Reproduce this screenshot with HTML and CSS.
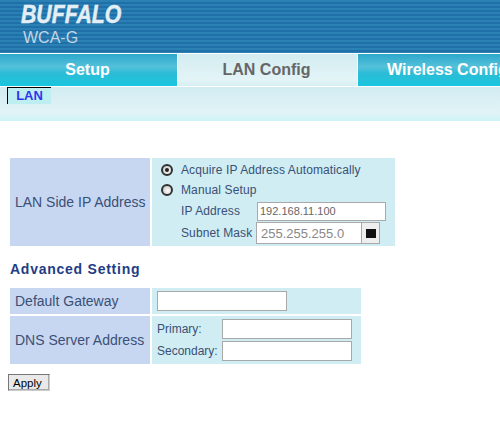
FILE: index.html
```html
<!DOCTYPE html>
<html lang="en">
<head>
<meta charset="UTF-8">
<title>LAN Config</title>
<link rel="stylesheet" href="styles.css">
</head>
<body>
<header class="banner">
  <div class="logo">BUFFALO</div>
  <div class="model">WCA-G</div>
</header>

<nav class="tabs">
  <div class="tab tab-setup">Setup</div>
  <div class="tab tab-lan active">LAN Config</div>
  <div class="tab tab-wireless">Wireless Config</div>
</nav>

<div class="subnav">
  <div class="subtab">LAN</div>
</div>

<main class="content">
  <!-- LAN side -->
  <div class="block block-lan">
    <div class="label">LAN Side IP Address</div>
    <div class="value lan-value">
      <div class="radio-row"><span class="radio checked"></span>Acquire IP Address Automatically</div>
      <div class="radio-row"><span class="radio"></span>Manual Setup</div>
      <div class="field-row ip-row"><span class="field-name">IP Address</span><input class="box ip" type="text" value="192.168.11.100"></div>
      <div class="field-row mask-row"><span class="field-name">Subnet Mask</span><div class="select"><span class="select-text">255.255.255.0</span><span class="select-btn"><i></i></span></div></div>
    </div>
  </div>

  <h2>Advanced Setting</h2>

  <div class="block block-gw">
    <div class="label">Default Gateway</div>
    <div class="value gw-value"><input class="box gw" type="text"></div>
  </div>
  <div class="block block-dns">
    <div class="label">DNS Server Address</div>
    <div class="value dns-value">
      <div class="dns-row"><span class="dns-name">Primary:</span><input class="box dns" type="text"></div>
      <div class="dns-row"><span class="dns-name">Secondary:</span><input class="box dns" type="text"></div>
    </div>
  </div>

  <button class="apply">Apply</button>
</main>
</body>
</html>
```

FILE: styles.css
```css
:root{
  --label:#c8d7f1;--value:#cfedf3;--ink:#3a5076;--line:#a9a9a9;
}
*{box-sizing:border-box;margin:0;padding:0;}
html,body{height:422px;overflow:hidden;background:#fff;}
body{font-family:"Liberation Sans",Arial,sans-serif;color:var(--ink);width:500px;}

.banner{height:53px;padding:1px 0 0 21px;background-color:#2376ad;background-image:repeating-linear-gradient(180deg,#2b80b4 0,#2b80b4 2px,#1f70a8 2px,#1f70a8 4px);}
.logo{font-size:25px;line-height:26px;font-weight:700;font-style:italic;color:#e3eef5;-webkit-text-stroke:.5px #e3eef5;transform:scaleX(.85);transform-origin:left;}
.model{font-size:16px;line-height:18px;color:#c5d6e4;padding:2px 0 0 2px;}

.tabs{display:flex;height:34px;margin-top:1px;background:#fff;width:600px;}
.tab{height:32px;font-size:16px;font-weight:700;display:flex;align-items:center;justify-content:center;color:#fff;background:linear-gradient(180deg,#2ba8cb 0,#55c1da 40%,#2cbcd6 60%,#19c6de 100%);}
.tab-setup{width:177px;margin-right:1px;padding-bottom:1px;padding-right:2px;}
.tab-lan{width:179px;margin-right:1px;padding-bottom:1px;padding-right:2px;}
.tab-wireless{width:180px;justify-content:flex-start;padding-left:29px;padding-bottom:1px;}
.tab.active{color:#666;background:linear-gradient(180deg,#d3ecf0 0,#e3f4f7 80%,#d6eff2 100%);}

.subnav{height:34px;margin-top:-1px;padding-left:7px;background:linear-gradient(180deg,#d2ecf1 0,#e2f3f7 75%,#cdf4f6 100%);}
.subtab{width:44px;height:17px;border-top:1px solid #000;border-left:1px solid #000;background:#bdeef1;color:#3333ee;font-size:13px;font-weight:700;line-height:16px;text-align:center;}

.content{padding:37px 0 0 10px;font-size:12px;}
.block{display:flex;gap:2px;}
.label{width:140px;background:var(--label);font-size:14px;padding-left:5px;display:flex;align-items:center;}
.value{background:var(--value);}

.block-lan{height:88px;}
.lan-value{width:243px;padding-left:9px;letter-spacing:.12px;}
.radio-row{height:20px;display:flex;align-items:center;gap:8px;}
.radio-row:first-child{margin-top:2px;}
.radio{width:12px;height:12px;border-radius:50%;background:radial-gradient(circle at 60% 60%,#fff,#bbb);border:2px solid #333;position:relative;}
.radio.checked::after{content:"";position:absolute;left:2px;top:2px;width:4px;height:4px;border-radius:50%;background:#222;}
.field-row{display:flex;align-items:center;padding-left:20px;}
.field-name{width:76px;}
.box{border:1px solid var(--line);background:#fff;font-family:inherit;outline:none;display:block;}
.ip-row{height:22px;}
.ip{width:129px;height:19px;font-size:11px;color:#666;padding-left:2px;}
.mask-row{height:22px;}
.select{width:124px;height:22px;border:1px solid var(--line);background:#fff;display:flex;margin-left:-1px;}
.select-text{flex:1;font-size:13px;color:#888;line-height:21px;padding-left:4px;letter-spacing:0;}
.select-btn{width:18px;border-left:1px solid var(--line);background:#eee;display:flex;align-items:center;justify-content:center;}
.select-btn i{width:10px;height:9px;background:#111;}

h2{font-size:14px;line-height:16px;font-weight:700;color:#1f3d85;letter-spacing:.75px;margin:15px 0 11px;}

.block-gw{height:26px;margin-bottom:2px;}
.gw-value{width:209px;padding:3px 0 0 5px;}
.gw{width:130px;height:20px;}
.block-dns{height:48px;}
.dns-value{width:209px;padding:2px 0 0 5px;}
.dns-row{display:flex;align-items:center;height:22px;}
.dns-name{width:65px;}
.dns{width:130px;height:20px;}

.apply{display:block;margin:10px 0 0 -2px;width:42px;height:17px;font-family:inherit;font-size:11.5px;text-align:left;padding-left:4px;color:#000;background:#e9e9e9;border:1px solid #777;border-right-color:#ccc;border-bottom-color:#ccc;box-shadow:inset -1px -1px 0 #aaa;}
```
